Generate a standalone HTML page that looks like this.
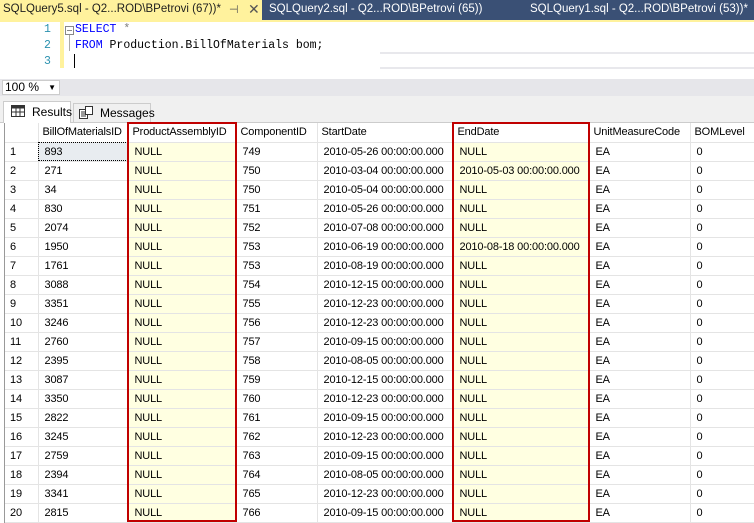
<!DOCTYPE html><html><head><style>
*{margin:0;padding:0;box-sizing:border-box}
body{width:754px;height:523px;overflow:hidden;background:#fff;font-family:"Liberation Sans",sans-serif;font-size:12px;position:relative;color:#000}
.abs{position:absolute}
.tabbar{left:0;top:0;width:754px;height:20px;background:#3a5075}
.t{position:absolute;top:3px;font-size:11.5px;white-space:nowrap}
.code{font-family:"Liberation Mono",monospace;font-size:11.5px;position:absolute;white-space:pre}
table{border-collapse:collapse;position:absolute;left:5px;top:123px;table-layout:fixed;width:755px}
td{height:19px;border-right:1px solid #e4e4e4;border-bottom:1px solid #e4e4e4;padding:0 0 0 6px;white-space:nowrap;overflow:hidden;font-size:11px;letter-spacing:-0.15px}
tr.h td{height:19px;padding-left:4px;font-size:11px}
td.y{background:#ffffe1}
td.n{padding-left:5px}
.red{position:absolute;border:2px solid #c00000}
</style></head><body>
<div class="abs tabbar"></div>
<div class="abs" style="left:0;top:0;width:262px;height:20px;background:#fff29d"></div>
<div class="t" style="left:3px;color:#1e1e1e">SQLQuery5.sql - Q2...ROD\BPetrovi (67))*</div>
<div class="t" style="left:229px;color:#555;font-size:11px">⊣</div>
<div class="t" style="left:248px;top:1px;color:#555;font-size:14px">✕</div>
<div class="t" style="left:269px;color:#fff">SQLQuery2.sql - Q2...ROD\BPetrovi (65))</div>
<div class="t" style="left:530px;color:#fff">SQLQuery1.sql - Q2...ROD\BPetrovi (53))*</div>
<div class="abs" style="left:0;top:20px;width:754px;height:2px;background:#fff29d"></div>
<div class="abs" style="left:60px;top:22px;width:4px;height:46px;background:#fff29d"></div>
<div class="code" style="left:44px;top:22px;color:#2b91af;line-height:16px">1
2
3</div>
<div class="abs" style="left:65px;top:26px;width:9px;height:9px;border:1px solid #888"></div>
<div class="abs" style="left:67px;top:30px;width:5px;height:1px;background:#888"></div>
<div class="abs" style="left:69px;top:35px;width:1px;height:16px;background:#aaa"></div>
<div class="code" style="left:75px;top:22px;line-height:16px"><span style="color:#00f">SELECT</span> <span style="color:#808080">*</span>
<span style="color:#00f">FROM</span> Production.BillOfMaterials bom;</div>
<div class="abs" style="left:74px;top:54px;width:1px;height:14px;background:#000"></div>
<div class="abs" style="left:380px;top:52px;width:374px;height:2px;background:#e8e8ec"></div>
<div class="abs" style="left:380px;top:67px;width:374px;height:2px;background:#e8e8ec"></div>
<div class="abs" style="left:0;top:79px;width:754px;height:17px;background:#e6e6ea"></div>
<div class="abs" style="left:2px;top:80px;width:58px;height:15px;background:#fff;border:1px solid #ccc;font-size:12px;padding-left:2px;line-height:13px">100 %<span style="position:absolute;right:3px;top:0;font-size:8px">▼</span></div>
<div class="abs" style="left:0;top:96px;width:754px;height:27px;background:#f0f0f0;border-bottom:1px solid #ccc"></div>
<div class="abs" style="left:3px;top:101px;width:68px;height:22px;background:#fff;border:1px solid #ccc;border-bottom:none;padding:3px 0 0 28px;font-size:12px">Results</div>
<svg class="abs" style="left:11px;top:105px" width="14" height="12"><rect x="0.5" y="0.5" width="13" height="11" fill="#fff" stroke="#333"/><rect x="0.5" y="0.5" width="13" height="3" fill="#333"/><path d="M5 0v12M9 0v12M0 7h14" stroke="#333"/></svg>
<div class="abs" style="left:73px;top:103px;width:78px;height:19px;background:#f0f0f0;border:1px solid #ccc;border-bottom:none;padding:2px 0 0 26px;font-size:12px">Messages</div>
<svg class="abs" style="left:79px;top:106px" width="14" height="13"><rect x="0.5" y="3.5" width="8" height="9" fill="#fff" stroke="#333"/><rect x="6.5" y="0.5" width="7" height="8" fill="#fff" stroke="#333"/><path d="M2 6h5M2 8h5M2 10h5" stroke="#333"/></svg>
<div class="abs" style="left:4px;top:123px;width:1px;height:400px;background:#999"></div>
<table>
<colgroup><col style="width:33px"><col style="width:90px"><col style="width:108px"><col style="width:81px"><col style="width:136px"><col style="width:136px"><col style="width:101px"><col style="width:70px"></colgroup>
<tr class="h"><td></td><td>BillOfMaterialsID</td><td>ProductAssemblyID</td><td>ComponentID</td><td>StartDate</td><td>EndDate</td><td>UnitMeasureCode</td><td>BOMLevel</td></tr>
<tr><td class="n">1</td><td style="background:#e8ecf0;outline:1px dotted #000;outline-offset:-1px">893</td><td class="y">NULL</td><td>749</td><td>2010-05-26 00:00:00.000</td><td class="y">NULL</td><td>EA</td><td>0</td></tr>
<tr><td class="n">2</td><td>271</td><td class="y">NULL</td><td>750</td><td>2010-03-04 00:00:00.000</td><td class="y">2010-05-03 00:00:00.000</td><td>EA</td><td>0</td></tr>
<tr><td class="n">3</td><td>34</td><td class="y">NULL</td><td>750</td><td>2010-05-04 00:00:00.000</td><td class="y">NULL</td><td>EA</td><td>0</td></tr>
<tr><td class="n">4</td><td>830</td><td class="y">NULL</td><td>751</td><td>2010-05-26 00:00:00.000</td><td class="y">NULL</td><td>EA</td><td>0</td></tr>
<tr><td class="n">5</td><td>2074</td><td class="y">NULL</td><td>752</td><td>2010-07-08 00:00:00.000</td><td class="y">NULL</td><td>EA</td><td>0</td></tr>
<tr><td class="n">6</td><td>1950</td><td class="y">NULL</td><td>753</td><td>2010-06-19 00:00:00.000</td><td class="y">2010-08-18 00:00:00.000</td><td>EA</td><td>0</td></tr>
<tr><td class="n">7</td><td>1761</td><td class="y">NULL</td><td>753</td><td>2010-08-19 00:00:00.000</td><td class="y">NULL</td><td>EA</td><td>0</td></tr>
<tr><td class="n">8</td><td>3088</td><td class="y">NULL</td><td>754</td><td>2010-12-15 00:00:00.000</td><td class="y">NULL</td><td>EA</td><td>0</td></tr>
<tr><td class="n">9</td><td>3351</td><td class="y">NULL</td><td>755</td><td>2010-12-23 00:00:00.000</td><td class="y">NULL</td><td>EA</td><td>0</td></tr>
<tr><td class="n">10</td><td>3246</td><td class="y">NULL</td><td>756</td><td>2010-12-23 00:00:00.000</td><td class="y">NULL</td><td>EA</td><td>0</td></tr>
<tr><td class="n">11</td><td>2760</td><td class="y">NULL</td><td>757</td><td>2010-09-15 00:00:00.000</td><td class="y">NULL</td><td>EA</td><td>0</td></tr>
<tr><td class="n">12</td><td>2395</td><td class="y">NULL</td><td>758</td><td>2010-08-05 00:00:00.000</td><td class="y">NULL</td><td>EA</td><td>0</td></tr>
<tr><td class="n">13</td><td>3087</td><td class="y">NULL</td><td>759</td><td>2010-12-15 00:00:00.000</td><td class="y">NULL</td><td>EA</td><td>0</td></tr>
<tr><td class="n">14</td><td>3350</td><td class="y">NULL</td><td>760</td><td>2010-12-23 00:00:00.000</td><td class="y">NULL</td><td>EA</td><td>0</td></tr>
<tr><td class="n">15</td><td>2822</td><td class="y">NULL</td><td>761</td><td>2010-09-15 00:00:00.000</td><td class="y">NULL</td><td>EA</td><td>0</td></tr>
<tr><td class="n">16</td><td>3245</td><td class="y">NULL</td><td>762</td><td>2010-12-23 00:00:00.000</td><td class="y">NULL</td><td>EA</td><td>0</td></tr>
<tr><td class="n">17</td><td>2759</td><td class="y">NULL</td><td>763</td><td>2010-09-15 00:00:00.000</td><td class="y">NULL</td><td>EA</td><td>0</td></tr>
<tr><td class="n">18</td><td>2394</td><td class="y">NULL</td><td>764</td><td>2010-08-05 00:00:00.000</td><td class="y">NULL</td><td>EA</td><td>0</td></tr>
<tr><td class="n">19</td><td>3341</td><td class="y">NULL</td><td>765</td><td>2010-12-23 00:00:00.000</td><td class="y">NULL</td><td>EA</td><td>0</td></tr>
<tr><td class="n">20</td><td>2815</td><td class="y">NULL</td><td>766</td><td>2010-09-15 00:00:00.000</td><td class="y">NULL</td><td>EA</td><td>0</td></tr>
</table>
<div class="red" style="left:127px;top:122px;width:110px;height:400px"></div>
<div class="red" style="left:452px;top:122px;width:138px;height:400px"></div>
</body></html>
